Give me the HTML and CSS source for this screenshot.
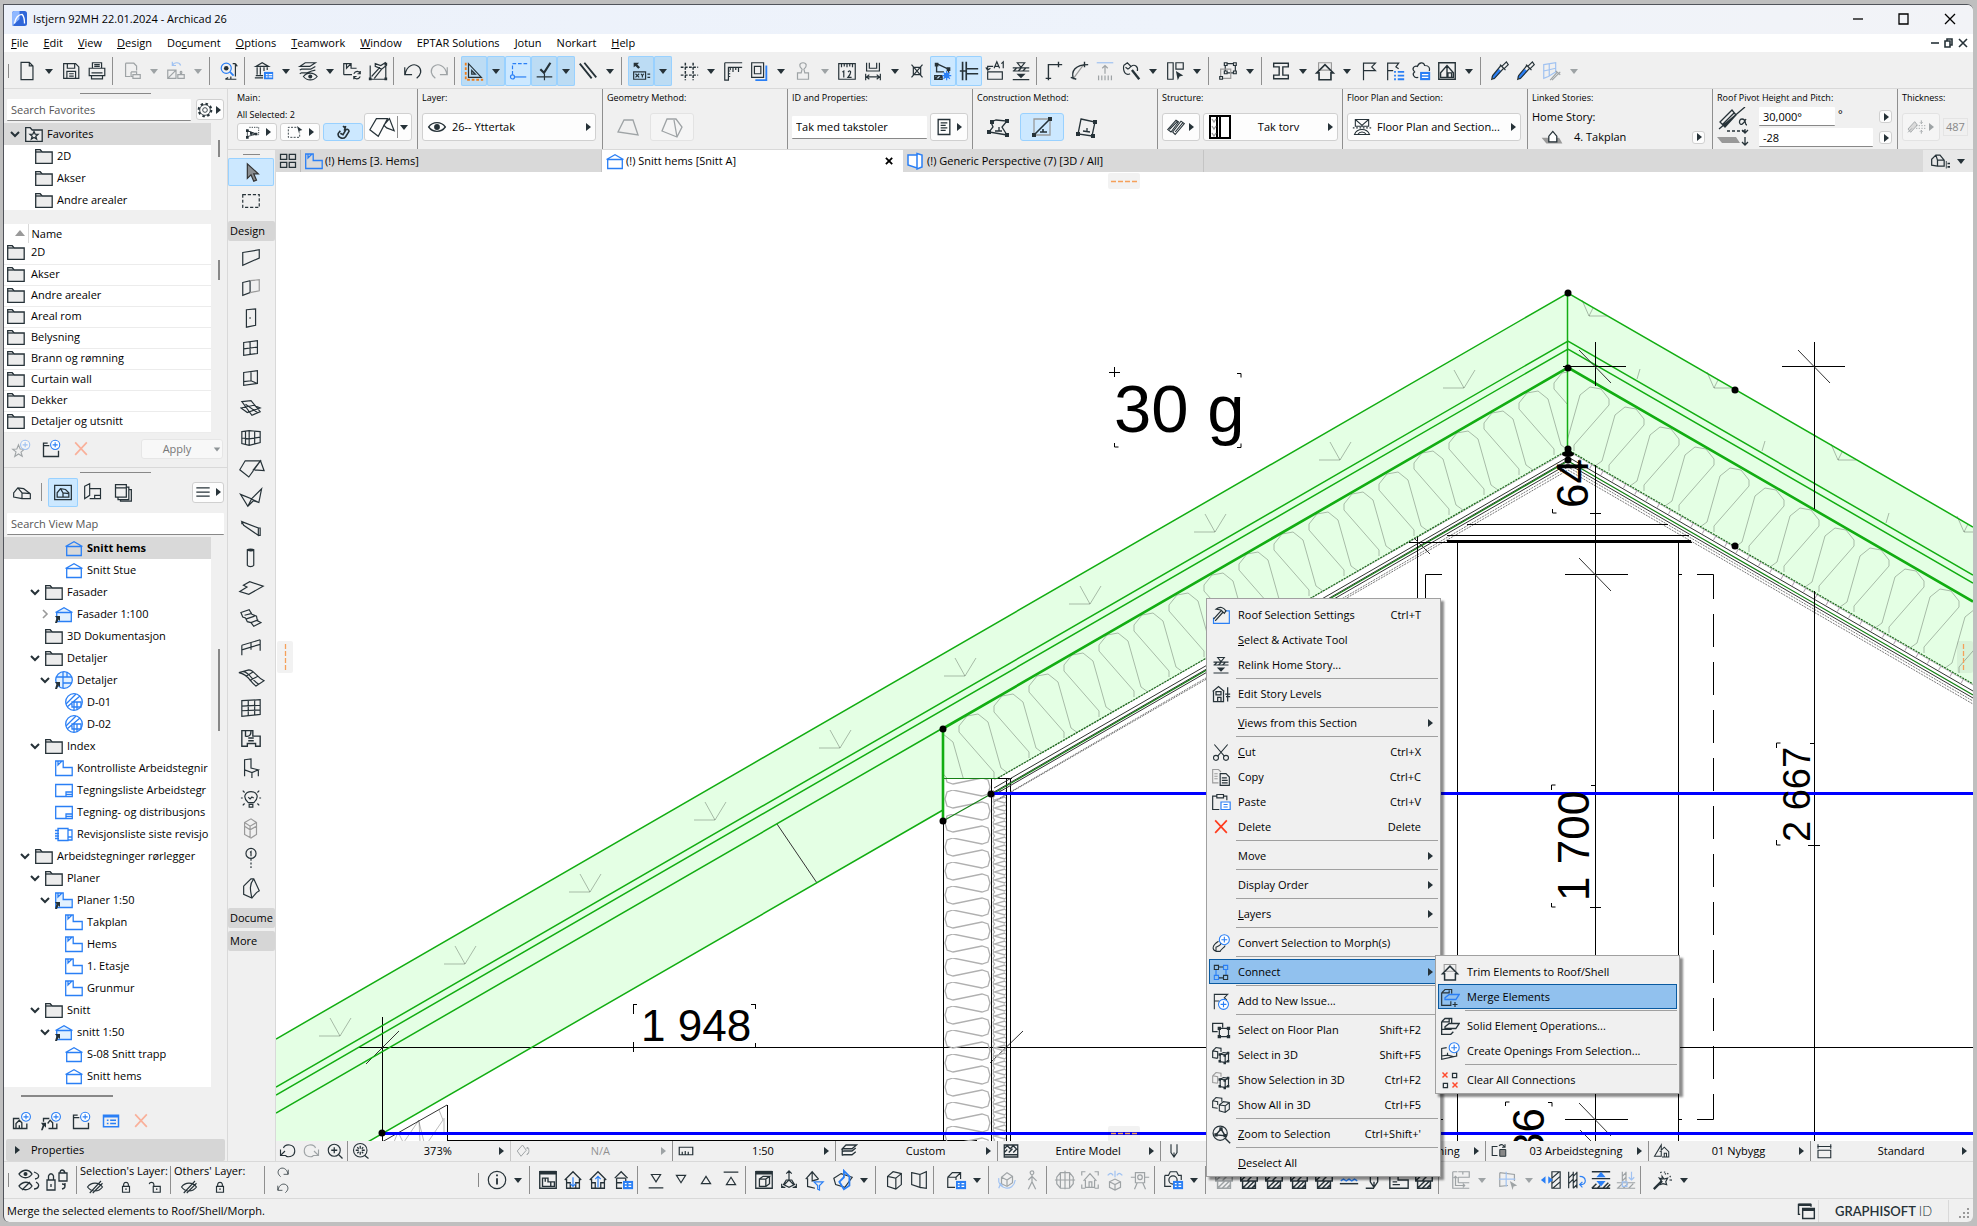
FILE: index.html
```html
<!DOCTYPE html>
<html lang="en">
<head>
<meta charset="utf-8">
<title>Istjern 92MH 22.01.2024 - Archicad 26</title>
<link rel="stylesheet" href="styles.css">
</head>
<body>
<svg class="sprite" aria-hidden="true">
<defs>
<symbol id="drop" viewBox="0 0 10 10"><path class="f" d="M1 3h8L5 8z"/></symbol>
<symbol id="play" viewBox="0 0 10 10"><path class="f" d="M3 1v8l5-4z"/></symbol>
<symbol id="chev" viewBox="0 0 20 20"><path stroke-width="2" d="M6 8l4 4 4-4"/></symbol>
<symbol id="chevr" viewBox="0 0 20 20"><path class="g" stroke-width="1.600" d="M8 6l4 4-4 4"/></symbol>
<symbol id="folder" viewBox="0 0 18 18"><path class="pf" d="M.7 2.700h4.500l2 2.300h10v11.300H.7z"/><path d="M.7 5h6"/></symbol>
<symbol id="favfolder" viewBox="0 0 18 18"><path class="pf" d="M.7 2.700h4.500l2 2.300h10v11.300H.7z"/><path d="M9 6.500l1.200 2.700 2.800.2-2.200 1.800.8 2.800L9 12.400 6.400 14l.8-2.800L5 9.400l2.800-.2z"/></symbol>
<symbol id="sect" viewBox="0 0 18 18"><path class="b" d="M1.700 7.500h14.600v9H1.700zM.5 7.500L9 2.700l8.500 4.800"/></symbol>
<symbol id="sectl" viewBox="0 0 18 18"><path class="b bf" d="M1.700 7.500h14.600v9H1.700zM.5 7.500L9 2.700l8.500 4.800"/><path class="f" d="M0 11h5v5L3.500 14.500 2 18H0l1.500-5z"/></symbol>
<symbol id="plan" viewBox="0 0 18 18"><path class="b" d="M.7 2h7.500v6.500h9v8H.7zM3 2v4l4-4"/></symbol>
<symbol id="planl" viewBox="0 0 18 18"><path class="b bf" d="M.7 2h7.500v6.500h9v8H.7zM3 2v4l4-4"/><path class="f" d="M0 11h5v5L3.500 14.500 2 18H0l1.500-5z"/></symbol>
<symbol id="det" viewBox="0 0 18 18"><circle class="b" cx="9" cy="9" r="8.300"/><path class="b" d="M1 11L11 1M2 14L15 3M7 9h9v5H7zM9 9v8M12 9v8"/></symbol>
<symbol id="detl" viewBox="0 0 18 18"><circle class="b bf" cx="9" cy="9" r="8.300"/><path class="b" d="M1 6h7v6h9M8 1v5M8 12v5M8 6h9M12 1v5"/><path class="f" d="M0 11h5v5L3.500 14.500 2 18H0l1.500-5z"/></symbol>
<symbol id="layout" viewBox="0 0 18 18"><path class="b" d="M.7 3.500h16.600v12H.7zM11 15.500v-4.500h6M11 13.300h6"/></symbol>
<symbol id="rev" viewBox="0 0 18 18"><path class="b" d="M3 3.500h10v12H3zM13 5h4v10h-4M13 12h4M0 5.500h4M0 8.500h4M0 11h4M0 13.500h4"/></symbol>

<symbol id="new" viewBox="0 0 24 24"><path d="M5.500 2.500h9l4 4v15h-13zM14.500 2.500v4h4"/></symbol>
<symbol id="save" viewBox="0 0 24 24"><path d="M4 4h13l3.500 3.500V20H4zM8 4v5h8V4M7.500 20v-7.500h9.500V20M10 15h5M10 17.500h5"/></symbol>
<symbol id="print" viewBox="0 0 24 24"><path d="M7 9V3h10v6M9 5h6M9 7h6M3.500 9h17v8h-17zM6 17v3.500h12V17M6 14h12"/></symbol>
<symbol id="link" viewBox="0 0 24 24"><path d="M5 3.500h9l3 3v5M5 3.500V18h5M11 13h6v3M13 16h8v4h-8zM11 13v5h2"/></symbol>
<symbol id="swap" viewBox="0 0 24 24"><path class="b" d="M8 6c2-4 8-4 9 0M8 2v4h4"/><path d="M3 11h9v9H3zM3 20l9-9M14 20v-4h7v4zM17.500 16c-3-5 3-5 0 0"/></symbol>
<symbol id="find" viewBox="0 0 24 24"><circle class="b" cx="9" cy="9" r="5.500"/><circle class="f" cx="9" cy="9" r="2.500"/><path class="b" stroke-width="2" d="M13 13l4 4"/><path d="M19 4v14M19 4h-3M19 4l2 3M8 21h12M8 21l3-2M14 21v-3"/></symbol>
<symbol id="lib" viewBox="0 0 24 24"><path d="M3 7l7-4 7 4zM4.500 8v8M8 8v8M12 8v4M15.500 8v3M3 17h8M2 19.500h9"/><path class="bp" d="M12 13h10v8H12z"/><path class="w" d="M14 16h2M17 16h4M14 18.500h2M17 18.500h4"/></symbol>
<symbol id="lay" viewBox="0 0 24 24"><path d="M3 7l6-4h11l-6 4zM3 11l2-1h10l5-3M3 15l2-1h6l5-2 4-1M7 18c4-5 11-5 15 0-4 5-11 5-15 0z"/><circle class="f" cx="14.500" cy="18" r="2.200"/></symbol>
<symbol id="map" viewBox="0 0 24 24"><path d="M3 16V4h8v5h6M3 16h9M6 4v5l5-5M14 15c2-4 6-3 7 0M21 12v3h-3M21 18c-2 4-6 3-7 0M14 21v-3h3"/></symbol>
<symbol id="ham" viewBox="0 0 24 24"><path d="M3.500 6v15h17V6M5 18L14 8M8 20l8-10M9 4l6 2 5-3 1 3-5 4-7-3z"/><path class="f" d="M2 19h3v3H2zM19 19h3v3h-3zM19 3h3v3h-3z"/></symbol>
<symbol id="undo" viewBox="0 0 24 24"><path d="M3 8v8h8M3.500 15.500C5 6 13 3 18 7c4 4 3 9-2 13"/></symbol>
<symbol id="redo" viewBox="0 0 24 24"><path d="M21 8v8h-8M20.500 15.500C19 6 11 3 6 7c-4 4-3 9 2 13"/></symbol>
<symbol id="tri" viewBox="0 0 24 24"><path class="o" stroke-dasharray="3 2" d="M3 3v18.500h19"/><path d="M6 4v15h14zM9.500 11.500v4h4z"/></symbol>
<symbol id="guide" viewBox="0 0 24 24"><path class="b" stroke-dasharray="4 2" d="M6 16V4h16"/><path class="b" d="M8 18.500h13"/><circle class="b" cx="6" cy="18.500" r="2.200"/></symbol>
<symbol id="snap" viewBox="0 0 24 24"><path d="M4 18.500h17M12.500 15v7"/><path stroke-width="2.400" d="M8 10l4 4 7-11"/></symbol>
<symbol id="par" viewBox="0 0 24 24"><path stroke-width="2" d="M3 4l13 16M8 3l13 16"/></symbol>
<symbol id="xy" viewBox="0 0 24 24"><path d="M4 13h13v8H4zM19 15.500h3M19 19h3M6 15l4 4M10 15l-4 4M12 15l1.500 2 1.500-2M13.500 17v2"/><path class="f" d="M4 3h6L8 5l3 3-2 1.500-3-3L4 8z"/></symbol>
<symbol id="grid" viewBox="0 0 24 24"><path stroke-width="1.600" stroke-dasharray="3 1.500" d="M3 8h19M3 16.500h19M8 3v19M16.500 3v19"/></symbol>
<symbol id="ruler" viewBox="0 0 24 24"><path d="M3 3h19M3 3v19h4V8h15M9 8v3M12 8v5M15 8v3M18 8v5M7 12h2M7 15h2M7 18h2"/></symbol>
<symbol id="dupe" viewBox="0 0 24 24"><path d="M4 3h13v16H4zM7 7h7v8H7z"/><path class="b" stroke-width="2" d="M20 6v16H8"/></symbol>
<symbol id="stamp" viewBox="0 0 24 24"><path d="M6 21v-7h4l1-4c-4-3-3-7 1-7s5 4 1 7l1 4h4v7z"/></symbol>
<symbol id="meas" viewBox="0 0 24 24"><path d="M3 4h18v17H3zM6 4v4M9 4v3M12 4v4M15 4v3M18 4v4M7 13l1.500-1v7M13 13c4-3 4 1 0 6h4"/></symbol>
<symbol id="dimh" viewBox="0 0 24 24"><path d="M5 3v9h14V3M8 3v6h8V3M4 15v7M20 15v7M5 18.500h14M8 16l-3 2.500L8 21M16 16l3 2.500-3 2.500"/></symbol>
<symbol id="xs" viewBox="0 0 24 24"><path d="M6 5l12 14M18 5L6 19M8 8h8v8H8z"/></symbol>
<symbol id="sun" viewBox="0 0 24 24"><path stroke-width="1.500" d="M5 4l13 6v4M5 4v9h8M3 21v-4h8v4zM3 21l4-4M7 21l4-4"/><path class="f" d="M3 3h4v4H3zM16 8h4v4h-4z"/><circle class="bp" cx="16" cy="17" r="3"/><path class="b" d="M16 12v10M11 17h10M12.500 13.500l7 7M19.500 13.500l-7 7"/></symbol>
<symbol id="tjoin" viewBox="0 0 24 24"><path stroke-width="1.800" d="M5 2v20M9 2v20M9 9.500h13M9 15h13M2 12h7"/></symbol>
<symbol id="a1" viewBox="0 0 24 24"><path d="M4 13h16v8H4zM4 10V7h6M2 8l2 3 3-2M11 9l3-7 3 7M12 7h4M19 4l2-2v7"/></symbol>
<symbol id="relink" viewBox="0 0 24 24"><path d="M3 8.500h18M3 12h18M3 21.500h18M8 3h8l-4 5zM4 12l3-3M9 12l3-3M14 12l3-3"/><path class="f" d="M7 15h10l-5 5z"/></symbol>
<symbol id="corner" viewBox="0 0 24 24"><path stroke-width="1.500" d="M7 22V5h15M18 2v6M4 20h6"/></symbol>
<symbol id="arc" viewBox="0 0 24 24"><path class="g" d="M6 20L17 5"/><path stroke-width="1.500" d="M6 21C3 12 8 5 22 5M18 2v6M3 19l6 2"/></symbol>
<symbol id="upl" viewBox="0 0 24 24"><path class="b" d="M3 3h18"/><path d="M12 6v9M9 9l3-3 3 3M5 17v5M8.500 17v5M12 17v5M15.500 17v5M19 17v5"/></symbol>
<symbol id="wr" viewBox="0 0 24 24"><path d="M4 6l4-3 4 4c4-3 8 0 7 5M4 6c-1 8 3 11 7 9M9 10l3-3M6 8l3 2"/><path stroke-width="2.600" d="M13 11l8 10"/></symbol>
<symbol id="boxa" viewBox="0 0 24 24"><path d="M4 3h6v18H4zM13 3h8v7h-8z"/><path class="f" d="M13 12l8 5-4 1-2 4z"/></symbol>
<symbol id="grp" viewBox="0 0 24 24"><path d="M9 4h11v10H9z"/><path class="g" d="M4 10h11v10H4z"/><path class="pf" d="M8 3h3v3H8zM18 3h3v3h-3zM18 12h3v3h-3zM8 12h3v3H8zM3 18h3v3H3z"/></symbol>
<symbol id="ibeam" viewBox="0 0 24 24"><path stroke-width="1.500" d="M4 3.500h16v4h-6v9h6v4H4v-4h6v-9H4z"/></symbol>
<symbol id="house" viewBox="0 0 24 24"><path class="g" d="M5 3h14v8H5z"/><path stroke-width="1.800" d="M3 14l9-9 9 9h-2.500v7.500h-13V14z"/></symbol>
<symbol id="flag" viewBox="0 0 24 24"><path d="M6 22V3.500h13l-4 4 4 4H6"/></symbol>
<symbol id="flagl" viewBox="0 0 24 24"><path d="M4 22V3.500h12l-3 4 3 2M4 11.500h6"/><path class="b" stroke-width="2" d="M11 13h2M15 13h7M11 17h2M15 17h7M11 21h2M15 21h7"/></symbol>
<symbol id="cloud" viewBox="0 0 24 24"><path d="M9 19c-5 1-7-4-4-6-4-4 0-7 3-6 2-5 7-5 8-1 5 0 6 3 5 6"/><path class="bp" d="M11 13h11v9H11z"/><path class="w" d="M13 16h7M13 19h7"/></symbol>
<symbol id="photo" viewBox="0 0 24 24"><path stroke-width="1.500" d="M3 3h18v18H3zM5 19V14L12 6l7 8v5zM13 19v-5h4v5M12 6v13"/></symbol>
<symbol id="pip" viewBox="0 0 24 24"><path class="b" stroke-width="4" d="M4 20l8-9"/><path d="M3 21l1-4 9-11 3 3-10 11zM12 5l6 6M14 7l5-5 2 3-5 5"/></symbol>
<symbol id="pipg" viewBox="0 0 24 24"><path class="b" d="M3 5l13-2v10l-8 5-5 2zM9 4v14M3 12l13-3"/><path d="M10 22l8-9M12 22l9-9M16 12l5 4"/></symbol>

<symbol id="gear" viewBox="0 0 24 24"><circle cx="12" cy="12" r="3.500"/><circle cx="12" cy="12" r="8"/><circle cx="12" cy="12" r="9.500" stroke-width="3" stroke-dasharray="3.700 3.700"/></symbol>
<symbol id="sel1" viewBox="0 0 24 24"><path stroke-dasharray="2 1.500" d="M8 5h14v11H11"/><path class="f" d="M3 8h4v4H3zM3 18h4v4H3zM16 13h4v4h-4zM9 12h4v4H9z"/><path d="M5 10v9l13-4zM5 10l13 5"/></symbol>
<symbol id="sel2" viewBox="0 0 24 24"><path stroke-dasharray="3 2" d="M14 5H2v15h17v-7"/><path class="f" d="M15 3l8 6-4 1-1 4z"/></symbol>
<symbol id="mag" viewBox="0 0 24 24"><path stroke-width="2.400" d="M8 10l-3 4c-2 6 7 10 11 5l5-8c0-3-3-4-5-2l-4 7-4-2M12 3l4 4M16 3l-2 7"/></symbol>
<symbol id="roofi" viewBox="0 0 30 24"><path d="M9 3h12L11 22 2 15zM17 10l6-7 5 13-8-3z"/></symbol>
<symbol id="eye" viewBox="0 0 24 24"><path stroke-width="1.600" d="M2 12c5-7 15-7 20 0-5 7-15 7-20 0z"/><circle class="f" cx="12" cy="12" r="3.500"/></symbol>
<symbol id="gm1" viewBox="0 0 24 24"><path d="M8 5h9l5 15L2 17z"/></symbol>
<symbol id="gm2" viewBox="0 0 24 24"><path d="M7 4h9l6 8-5 10L2 16zM14 5l3 17"/></symbol>
<symbol id="doc" viewBox="0 0 24 24"><path stroke-width="1.600" d="M5 3h14v18H5zM8 7h8M8 10h6M8 13h8M8 16h6"/></symbol>
<symbol id="cm1" viewBox="0 0 24 24"><path d="M5 7l5-2 11 1-5 6 5 8-18-3 4-5zM9 16h7M13 12v4"/><path class="f" d="M4 5h4v4H4zM1 15h4v4H1zM19 18h4v4h-4zM19 4h4v4h-4z"/></symbol>
<symbol id="cm2" viewBox="0 0 24 24"><path class="g" d="M4 4h16v16H4z"/><path stroke-width="1.600" d="M4 20L20 4M10 17h7M13 14v3"/><path class="f" d="M2 18h4v4H2zM18 2h4v4h-4z"/></symbol>
<symbol id="cm3" viewBox="0 0 24 24"><path d="M7 4l14 3-3 14-14-2zM9 16l7 1M13 13v3"/><path class="f" d="M2 17h4v4H2zM17 19h4v4h-4zM19 5h4v4h-4z"/></symbol>
<symbol id="hatch" viewBox="0 0 24 24"><path d="M2 15L12 4l3 2L6 18zM8 18L18 5l4 3-11 13zM4 15L14 5M11 18l9-11"/></symbol>
<symbol id="comp" viewBox="0 0 24 24"><path class="wf" stroke="#000" stroke-width="2" d="M2 1h20v22H2z"/><path stroke="#000" stroke-width="2" d="M9 1v22M12 1v22"/><path class="g" d="M4 4l2 3 2-3M4 11l2 3 2-3M4 18l2 3 2-3"/></symbol>
<symbol id="fps" viewBox="0 0 24 24"><path d="M4 3h16v8H4zM4 3l8 7 8-7M3 21c3-8 15-8 18 0zM7 21c2-4 8-4 10 0"/><path stroke-dasharray="2 2" d="M1 13h22"/></symbol>
<symbol id="hstory" viewBox="0 0 26 20"><path fill="#999" stroke="none" d="M0 11h22l4 7H6z"/><path class="wf" stroke-width="1.600" d="M9 16V9l5-6 5 6v7z"/></symbol>
<symbol id="slope" viewBox="0 0 32 40"><path d="M3 15L15 3l4 5L8 20zM5 18L17 6M7 19L19 8M2 22L28 0"/><path stroke-dasharray="3 2" d="M10 24h20"/><path d="M29 12c-6 12-9 0-4 0s2 6 5 6M28 22v4M25 23l3 3 3-3M28 30v8M25 35l3 3 3-3"/><path fill="#999" stroke="none" d="M0 30h19l4 6H5z"/></symbol>
<symbol id="thick" viewBox="0 0 30 24"><path fill="#bbb" d="M3 15L13 4l4 5L7 20zM3 20l6-6"/><path stroke-dasharray="2 2" d="M15 10h14M15 14h14"/><path d="M23 2v5M21 5l2 2 2-2M23 22v-5M21 19l2-2 2 2"/></symbol>
<symbol id="four" viewBox="0 0 24 24"><path stroke-width="1.500" d="M3 4h7.500v6H3zM13.500 4H21v6h-7.500zM3 13.500h7.500v6H3zM13.500 13.500H21v6h-7.500z"/></symbol>
<symbol id="d3" viewBox="0 0 18 18"><path class="b wf" stroke-width="1.500" d="M1 3h9v13l-9-3zM10 1.500l5 1.500v12l-5 2z"/></symbol>
<symbol id="h3" viewBox="0 0 24 24"><path stroke-width="1.500" d="M2 17V10l5-5h5l5 6v7H9zM9 18v-7L7 5M9 11h8"/><path class="f" d="M19 12h1v9h-1zM21 14h3v2h-3zM21 18h3v2h-3z"/></symbol>

<symbol id="starp" viewBox="0 0 24 24"><path d="M9 7l2 5 5 .3-4 3.500 1.500 5L9 18l-4.500 3 1.500-5.500-4-3.200 5-.3z"/><circle class="b wf" cx="17" cy="7" r="5.500"/><path class="b" d="M17 4v6M14 7h6"/></symbol>
<symbol id="foldp" viewBox="0 0 24 24"><path stroke-width="1.600" d="M10 8H3V5h5M3 8v13h18v-7"/><circle class="b wf" cx="17" cy="7" r="5.500"/><path class="b" d="M17 4v6M14 7h6"/></symbol>
<symbol id="homep" viewBox="0 0 24 24"><path stroke-width="1.600" d="M10 9H3v12h16v-6M6 21v-6l4-4 3 3v7M10 21v-4"/><circle class="b wf" cx="18" cy="7" r="5.300"/><path class="b" d="M18 4v6M15 7h6"/></symbol>
<symbol id="homel" viewBox="0 0 24 24"><path stroke-width="1.600" d="M10 9H3v4M9 21h10v-6M8 15l3-4 3 3v7"/><path class="f" d="M0 14h6v6l-2-2-2 5H0l2-6z"/><circle class="b wf" cx="18" cy="7" r="5.300"/><path class="b" d="M18 4v6M15 7h6"/></symbol>
<symbol id="ex" viewBox="0 0 24 24"><path stroke="#f9b09a" stroke-width="2" d="M5 4l14 15M19 4L5 19"/></symbol>
<symbol id="del" viewBox="0 0 24 24"><path stroke="#ff3b1d" stroke-width="2" d="M5 4l14 15M19 4L5 19"/></symbol>
<symbol id="listb" viewBox="0 0 24 24"><path class="b" stroke-width="1.800" d="M3 5h18v14H3zM3 7h18M7 11h2M7 15h2M11 11h7M11 15h7"/></symbol>
<symbol id="nav1" viewBox="0 0 24 24"><path stroke-width="1.400" d="M2 13l5-6 7 1 8 6v6H12l-10-2zM12 20v-7L7 7M12 13l10 1"/></symbol>
<symbol id="nav2" viewBox="0 0 24 24"><path stroke-width="1.500" d="M2 4h20v17H2zM5 18v-5l4-5 6 1 4 4v5zM12 18v-5L9 8M12 13l7 1"/></symbol>
<symbol id="nav3" viewBox="0 0 24 24"><path stroke-width="1.400" d="M2 5l6-3v14l-6 4zM8 8h13v12H8M14 20v-4h7"/></symbol>
<symbol id="nav4" viewBox="0 0 24 24"><path stroke-width="1.500" d="M3 3h13v15H3zM3 7h13M16 6h3v15H6v-3M19 9h3v14H9v-2"/></symbol>
<symbol id="ham3" viewBox="0 0 24 24"><path stroke-width="1.500" d="M4 7h16M4 12h16M4 17h16"/></symbol>

<symbol id="arrow" viewBox="0 0 24 24"><path fill="#8a8d90" stroke="#333" d="M8 3v16l4-4 3 7 3-1-3-7h5z"/></symbol>
<symbol id="marq" viewBox="0 0 24 24"><path stroke-dasharray="3.500 2" d="M3 5h18v14H3z"/></symbol>
<symbol id="t1" viewBox="0 0 24 24"><path d="M3 6l18-3v9L3 20z"/></symbol>
<symbol id="t2" viewBox="0 0 24 24"><path d="M3 6l8-2v13l-8 3z"/><path class="g" d="M11 4l10-1v12l-10 2"/></symbol>
<symbol id="t3" viewBox="0 0 24 24"><path d="M7 3l10-1v18L7 22zM10 12h2"/></symbol>
<symbol id="t4" viewBox="0 0 24 24"><path d="M4 6l15-2v14L4 20zM11 5v14M4 13l15-2"/></symbol>
<symbol id="t5" viewBox="0 0 24 24"><path d="M4 6l15-2v14L4 20zM12 5v10M4 16l8-1 7 3"/></symbol>
<symbol id="t6" viewBox="0 0 24 24"><path d="M2 5l10-1 10 12-9 4zM1 12l14-3 7 3-14 5zM6 8l13 9"/></symbol>
<symbol id="t7" viewBox="0 0 24 24"><path d="M2 5l8-1 12 1v12l-12 3-8-2zM10 4v16M6 5v14M16 5v14M2 12l8 1 12-2"/></symbol>
<symbol id="t8" viewBox="0 0 30 24"><path d="M8 4h17L12 22 2 14zM17 14l8-10 4 11z"/></symbol>
<symbol id="t9" viewBox="0 0 24 24"><path d="M0 8l12 5L23 2l-3 15-6-2-6 6zM12 13l8 4M12 13l-4 8"/></symbol>
<symbol id="t10" viewBox="0 0 24 24"><path d="M2 5l18 7v8L4 9zM2 5v3M20 12h2v8h-2"/></symbol>
<symbol id="t11" viewBox="0 0 24 24"><path d="M8 3v17c1 2 6 2 7 0V3zM8 3c1-1 6-1 7 0s-6 2-7 0"/></symbol>
<symbol id="t12" viewBox="0 0 30 24"><path d="M2 16l8-5-4-2 7-4 15 5-16 9z"/></symbol>
<symbol id="t13" viewBox="0 0 24 24"><path d="M1 6l9-3 3 5 5 2 1 5 4 2-8 4-3-4-4-1-2-4-3-1zM5 9l8-2M7 13l9-3M12 17l8-3"/></symbol>
<symbol id="t14" viewBox="0 0 24 24"><path d="M2 9l20-6M2 14l20-6M2 9v11M12 6v8M22 3v12"/></symbol>
<symbol id="t15" viewBox="0 0 30 24"><path d="M1 6l11-3c6 0 8 8 17 12l-9 6C13 16 12 8 1 6zM6 5c7 1 9 9 17 14M9 10l8-5M13 15l9-5"/></symbol>
<symbol id="t16" viewBox="0 0 24 24"><path d="M2 4l20-1v16L2 21zM9 4v16M16 3v17M2 10l20-1M2 15l20-1"/></symbol>
<symbol id="t17" viewBox="0 0 24 24"><path stroke-width="1.500" d="M2 4h12v6h8v11h-5v-3H8v3H2zM6 4v6c5 1 6-2 6-6M9 12h6M9 15h6"/></symbol>
<symbol id="t18" viewBox="0 0 24 24"><path d="M5 3l7-1v10l8 2-7 3-8-3zM5 14v7M13 17v6M20 14v7"/></symbol>
<symbol id="t19" viewBox="0 0 24 24"><path d="M9 17c-7-6-3-12 3-12s10 6 3 12zM10 19h4v3h-4zM9 11l2 2 2-2 2 1M1 12h2M21 12h2M3 4l2 2M21 4l-2 2M3 20l2-2M21 20l-2-2"/></symbol>
<symbol id="t20" viewBox="0 0 24 24"><path class="g" d="M5 6l7-4 6 4v13l-6 4-7-4zM5 6l6 4 7-4M11 10v13M5 10l6 4 7-4"/></symbol>
<symbol id="t21" viewBox="0 0 24 24"><circle cx="12" cy="7" r="5.500"/><path d="M11 6l1-1v5"/><path stroke-dasharray="2 2" d="M12 13v10"/></symbol>
<symbol id="t22" viewBox="0 0 24 24"><path d="M4 10l8-8h3l6 13-3 2-5 6-9-4zM15 2c-5 6-4 12-2 21"/></symbol>

<symbol id="cyc" viewBox="0 0 24 24"><path d="M2 6c4-5 10-5 13 0-3 5-10 5-13 0zM2 18c4-5 10-5 13 0-3 5-10 5-13 0zM5 22l8-8M17 4c6 2 6 6 1 7M19 14c5 3 2 7-2 7"/><circle class="f" cx="8.500" cy="6" r="2"/></symbol>
<symbol id="lock2" viewBox="0 0 24 24"><path d="M2 12h8v10H2zM3.500 12V8c1-3 4-3 5 0v4M14 5h8v8h-8zM15 5c0-4 4-4 5 0M17 16c4 0 4 4 0 5M20 15v3M6 16v3"/></symbol>
<symbol id="eyex" viewBox="0 0 24 24"><path stroke-width="1.500" d="M2 12c5-7 15-7 20 0-5 7-15 7-20 0zM5 20L20 4M9 20L22 7"/></symbol>
<symbol id="lock" viewBox="0 0 24 24"><path stroke-width="2" d="M6 11h12v10H6zM8 11V7c1-4 7-4 8 0v4M12 14v3"/></symbol>
<symbol id="ulock" viewBox="0 0 24 24"><path stroke-width="2" d="M9 11h12v10H9zM10 11V7c-1-4-7-4-8 0M15 14v3"/></symbol>
<symbol id="info" viewBox="0 0 24 24"><circle cx="12" cy="12" r="9.500"/><path stroke-width="2" d="M12 10v7M12 6v2"/></symbol>
<symbol id="b1" viewBox="0 0 24 24"><path stroke-width="1.500" d="M3 3h18v18H3zM6 10h6v4h7v5H6zM9 10v4M15 14v5"/><path class="f" d="M3 2h18v4H3z"/></symbol>
<symbol id="b2" viewBox="0 0 24 24"><path stroke-width="1.400" d="M3 12l9-9 9 9M5 11v10h14V11M5 15h4v6M15 21v-6h4"/><path class="b" d="M12 9v10M9 16l3 3 3-3"/></symbol>
<symbol id="b3" viewBox="0 0 24 24"><path stroke-width="1.400" d="M3 12l9-9 9 9M5 11v10h14V11M5 15h4v6M15 21v-6h4"/><path class="b" d="M12 8v12M9 11l3-3 3 3"/></symbol>
<symbol id="b4" viewBox="0 0 24 24"><path stroke-width="1.400" d="M3 10l7-7 7 7M5 10v11h6M5 15h6M15 10v3M5 10h10"/><path class="bp" d="M12 13h11v9H12z"/><path class="w" d="M14 16h2M18 16h3M14 19h2M18 19h3"/></symbol>
<symbol id="b5" viewBox="0 0 24 24"><path d="M4 20.500h16M7 6h10l-5 8z"/></symbol>
<symbol id="b6" viewBox="0 0 24 24"><path d="M7 7h10l-5 8z"/></symbol>
<symbol id="b7" viewBox="0 0 24 24"><path d="M7 16h10l-5-8z"/></symbol>
<symbol id="b8" viewBox="0 0 24 24"><path d="M4 3.500h16M7 17h10l-5-8z"/></symbol>
<symbol id="b9" viewBox="0 0 24 24"><path stroke-width="1.400" d="M3 3h18v18H3zM7 11h7v8H7zM7 11l4-3h7l-4 3M18 8v8l-4 3"/><path class="f" d="M3 2h18v4H3z"/></symbol>
<symbol id="b10" viewBox="0 0 24 24"><path d="M12 3v9L4 20M12 12l8 8M9 5l3-3 3 3M9 12h6l3 5-6 3-6-3zM4 16v4h4M20 16v4h-4"/></symbol>
<symbol id="b11" viewBox="0 0 24 24"><path d="M3 11l7-8 7 8M5 10v9l8 2M10 3v10l7-2"/><path class="b" d="M12 14h10l-4 4v5l-2-1v-4z"/></symbol>
<symbol id="b12" viewBox="0 0 24 24"><path d="M2 10l8-5 12 4-8 11-10-3z"/><path class="b" stroke-width="2" d="M13 2l6 6v10l-6 4-5-8 5-5z"/></symbol>
<symbol id="b13" viewBox="0 0 24 24"><path d="M5 8l6-5 9 2v12l-6 5-9-3zM5 8l9 2v12M14 10l6-5"/></symbol>
<symbol id="b14" viewBox="0 0 24 24"><path d="M4 4l9 2v14l-9-3zM13 6l7-3v18l-7-1"/></symbol>
<symbol id="b15" viewBox="0 0 24 24"><path d="M3 9l5-5h9v7M3 9h9v3M3 9v11h8M12 9l5-5"/><path class="bp" d="M12 13h11v9H12z"/><path class="w" d="M14 16h2M18 16h3M14 19h2M18 19h3"/></symbol>
<symbol id="b16" viewBox="0 0 24 24"><path d="M6 9l6-5 6 4v7l-6 4-6-3zM6 9l6 3v6M12 12l6-4"/><path class="b" d="M3 10c-2 12 16 16 18 2M3 21l2-5 3 4"/></symbol>
<symbol id="b17" viewBox="0 0 24 24"><circle cx="12" cy="4" r="2"/><path d="M12 6v8l4 8M12 14l-4 8M8 12l4-4 5 5"/></symbol>
<symbol id="b18" viewBox="0 0 24 24"><path d="M7 4h10l4 5v7l-4 5H7l-4-5V9zM12 2v20M1 12h22M7 4v17M17 4v17"/></symbol>
<symbol id="b19" viewBox="0 0 24 24"><path d="M3 7V3h4M17 3h4v4M21 17v4h-4M7 21H3v-4M5 13l7-8 7 8M7 12v8h10v-8M11 20v-6h3v6"/></symbol>
<symbol id="b20" viewBox="0 0 24 24"><path class="b" d="M4 7c3-3 4-3 6 0M20 7c-3-3-4-3-6 0M12 2v7"/><path d="M6 14l6-3 6 3v6l-6 3-6-3zM6 14l6 3 6-3M12 17v6"/></symbol>
<symbol id="b21" viewBox="0 0 24 24"><path d="M7 4h10v11H7zM2 9h5M17 9h5M9 15l-3 7M15 15l3 7"/><circle cx="12" cy="9" r="2.500"/></symbol>
<symbol id="b22" viewBox="0 0 24 24"><path d="M3 7h4l2-4h7l2 4h3v5M3 7v12h7"/><circle cx="12" cy="12" r="4.500"/><path class="bp" d="M12 13h11v9H12z"/><path class="w" d="M14 16h2M18 16h3M14 19h2M18 19h3"/></symbol>
<symbol id="ha" viewBox="0 0 24 24"><path stroke-width="1.600" d="M3 8h18v5H3zM5 13v8h14v-8M5 21l8-8M10 21l8-8M15 21l4-4M3 13l5-5M10 13l5-5"/></symbol>
<symbol id="hb" viewBox="0 0 24 24"><path class="b" stroke-width="1.600" d="M3 13l3-2 3 2 3-2 3 2 3-2 3 2"/><path stroke-width="1.600" d="M2 16h20"/></symbol>
<symbol id="hl" viewBox="0 0 24 24"><path stroke-width="1.500" d="M2 5h9v7h11v9H2zM5 17h8M5 14h5"/></symbol>
<symbol id="pen" viewBox="0 0 24 24"><path stroke-width="1.500" d="M8 3v11l4 6 4-6V3M12 14v6"/></symbol>
<symbol id="pend" viewBox="0 0 24 24"><path stroke-width="1.500" d="M8 3v11l4 6 4-6V3M12 14v6M3 21h9"/></symbol>
<symbol id="c1" viewBox="0 0 24 24"><path d="M3 3h5M3 3v18h18M9 3h12v6H9M9 15h12M9 9v6M14 3v3M6 8v10h10M4 10l2-2 2 2M14 16l2 2-2 2"/></symbol>
<symbol id="c2" viewBox="0 0 24 24"><path d="M3 4l16 2v7M3 4v15l9-1"/><path class="b" d="M10 3v16M2 11h18"/><path class="f" d="M14 13l8 5-4 1-1 4z"/></symbol>
<symbol id="c3" viewBox="0 0 24 24"><path d="M13 3h9v18h-9zM13 10l8-7M13 16l9-8M14 21l8-7"/><path class="bp" d="M6 8v8l-5-4zM9 8v8l5-4z"/></symbol>
<symbol id="c4" viewBox="0 0 24 24"><path d="M4 3v18M9 3v18M13 3v18M4 10l5-5M4 16l5-5M9 8l4-4M9 15l4-4M9 21l4-4"/><path class="b" d="M16 8c8 0 8 10 1 9M19 14l-3 3 3 3"/></symbol>
<symbol id="c5" viewBox="0 0 24 24"><path stroke-width="1.600" d="M2 3h20M2 10.500h20M2 21h20M2 21l5-5M8 21l3-3M14 21l6-6M18 21l4-4"/><path class="bp" d="M7 9l5-6 5 6zM7 13l5 6 5-6z"/></symbol>
<symbol id="c6" viewBox="0 0 24 24"><path d="M8 3v11M12 3v11M8 8l4-4M8 13l4-4M2 15h20M2 21h20M3 21l5-5M9 21l5-5M15 21l5-5"/><path class="b" d="M18 3v9M15 9l3 3 3-3M8 14h5v5H8z"/></symbol>
<symbol id="wand" viewBox="0 0 24 24"><path stroke-width="2.500" d="M2 22l9-9"/><path d="M11 8l2 3 4-1-2 4 1 3-4-1-3 1 1-4-2-3 3 1z"/><path stroke-dasharray="1.500 2.500" d="M9 4c6-3 13 3 12 11M14 5l3 2M19 12h3"/></symbol>
<symbol id="rotv" viewBox="0 0 24 24"><path d="M3 12l7-8 5 7-7 8zM15 8c4 0 5 6 1 9M19 9l-3-2M16 17l2-3"/></symbol>
<symbol id="scale" viewBox="0 0 24 24"><path stroke-width="1.600" d="M3 7h18v10H3zM7 17v-4M11 17v-5M15 17v-4"/></symbol>
<symbol id="layq" viewBox="0 0 24 24"><path stroke-width="1.700" d="M8 4h14l-6 5H3zM3 13l2-1h11l5-4M3 18l2-1h11l5-4M3 9v9"/></symbol>
<symbol id="modq" viewBox="0 0 24 24"><path stroke-width="1.700" d="M3 4h18v16H3zM3 9l4-4 4 4 4-4 4 4M3 14l4-4M9 14l5-5M15 14l5-5M3 17h18"/></symbol>
<symbol id="ovr" viewBox="0 0 24 24"><path stroke-width="1.500" d="M10 6H3v12h7M12 5c4-3 6-1 7 2M20 3v4h-4"/><path fill="#888" d="M13 10h8v9h-8z"/></symbol>
<symbol id="ren" viewBox="0 0 24 24"><path stroke-width="1.400" d="M2 19L11 4v15zM9 13l6-6 6 6v7h-9M15 20v-5h3v5"/></symbol>
<symbol id="std" viewBox="0 0 24 24"><path stroke-width="1.500" d="M4 11h17v10H4zM3 6h19M4 3v6M21 3v6"/></symbol>
<symbol id="zprev" viewBox="0 0 24 24"><path stroke-width="1.500" d="M2 10v8h8M3 17l5-5M6 8c2-6 15-6 15 4 0 6-6 9-12 7"/></symbol>
<symbol id="znext" viewBox="0 0 24 24"><path stroke-width="1.500" d="M22 10v8h-8M21 17l-5-5M18 8c-2-6-15-6-15 4 0 6 6 9 12 7"/></symbol>
<symbol id="zin" viewBox="0 0 24 24"><circle cx="11" cy="11" r="8" stroke-width="1.500"/><path stroke-width="1.700" d="M17 17l5 5M7 11h8M11 7v8"/></symbol>
<symbol id="zfit" viewBox="0 0 24 24"><circle cx="11" cy="11" r="9" stroke-width="1.500"/><path stroke-width="1.700" d="M17 18l5 4M11 5v4M11 13v4M5 11h4M13 11h4M7 7l2 2M15 7l-2 2M7 15l2-2M15 15l-2-2"/></symbol>
<symbol id="wins" viewBox="0 0 24 24"><path stroke-width="1.700" d="M8 9h14v12H8zM5 16H3V4h15v3"/><path class="f" d="M3 3h15v3H3zM8 9h14v3H8z"/></symbol>

<symbol id="m1" viewBox="0 0 24 24"><path class="b" stroke-width="1.400" d="M3 15v7h19V7h-4"/><path stroke-width="1.500" d="M3 17L12 7M5 19L14 9M6 5c5-4 9-2 12 2l-2 3-4-4z"/></symbol>
<symbol id="m4" viewBox="0 0 24 24"><path stroke-width="1.500" d="M2 9l7-6 7 6M3 9v12h12V9M6 9h6v4H6zM8 21v-5h4v5M20 4v17M17 12h6M18 15h5"/></symbol>
<symbol id="cut" viewBox="0 0 24 24"><circle cx="6" cy="19" r="3"/><circle cx="18" cy="19" r="3"/><path d="M4 3l12 14M20 3L8 17"/></symbol>
<symbol id="copy" viewBox="0 0 24 24"><path class="g" d="M9 19H2V3h7l3 3M4 8h4M4 11h4M4 14h4"/><path stroke-width="1.400" d="M11 8h7l4 4v10H11zM13 13h6M13 16h7M13 19h7"/></symbol>
<symbol id="paste" viewBox="0 0 24 24"><path stroke-width="1.400" d="M10 21H2V5h5M15 5h4v5M7 3h8v4H7z"/><path class="b wf" stroke-width="1.400" d="M12 12h11v9H12zM15 15h5M15 18h5"/></symbol>
<symbol id="morph" viewBox="0 0 24 24"><path d="M9 10c-8 5-8 10-3 12h5c1-3 5-4 6-7M6 22v-5c2-1 6-2 6-5"/><circle class="b wf" cx="16" cy="8" r="6"/><path class="b" d="M16 4.500v7M12.500 8h7"/></symbol>
<symbol id="conn" viewBox="0 0 24 24"><path class="b" d="M6 9v7M18 9v7"/><path d="M9 6h6M9 19h6"/><path d="M4 4h5v5H4zM15 16h5v5h-5z"/><path class="b" d="M15 4h5v5h-5zM4 16h5v5H4z"/></symbol>
<symbol id="issue" viewBox="0 0 24 24"><path d="M4 22V4h16l-4 4 3 3M4 12h6"/><circle class="b wf" cx="15" cy="16" r="6"/><path class="b" d="M15 12.500v7M11.500 16h7"/></symbol>
<symbol id="sfp" viewBox="0 0 24 24"><path stroke-width="1.500" d="M8 14H2V4h12v5M10 10h11v10H10z"/><path class="f" d="M8 8h4v4H8zM19 8h4v4h-4zM8 18h4v4H8zM19 18h4v4h-4z"/></symbol>
<symbol id="s3d" viewBox="0 0 24 24"><path stroke-width="1.400" d="M2 7l4-4 6 1v4M2 7v8l6 1M2 7l6 1v8M11 11l4-2 6 1v9l-4 2-6-1zM11 11l6 1v9M17 12l4-2"/><path class="f" d="M9 10h3v3H9zM19 8h3v3h-3zM9 18h3v3H9zM19 18h3v3h-3zM15 11h3v3h-3zM15 20h3v3h-3z"/></symbol>
<symbol id="ss3d" viewBox="0 0 24 24"><path class="g" d="M2 7l4-4 6 1v4M2 7v8l6 1M2 7l6 1v8"/><path stroke-width="1.400" d="M11 11l4-2 6 1v9l-4 2-6-1zM11 11l6 1v9M17 12l4-2"/><path class="f" d="M9 10h3v3H9zM19 8h3v3h-3zM9 18h3v3H9zM19 18h3v3h-3zM15 11h3v3h-3zM15 20h3v3h-3z"/></symbol>
<symbol id="a3d" viewBox="0 0 24 24"><path stroke-width="1.300" d="M2 7l4-4 7 1v4M2 7v8l6 1M2 7l6 1v4M10 12l5-4 7 1v8l-5 4-7-2zM10 12l7 1v8M17 13l5-4"/></symbol>
<symbol id="zsel" viewBox="0 0 24 24"><circle cx="11" cy="11" r="8.500" stroke-width="1.500"/><path stroke-width="1.700" d="M17 17l6 6M6 13l6-7 5 8z"/><path class="f" d="M4 11h4v4H4zM10 4h4v4h-4zM15 12h4v4h-4z"/></symbol>
<symbol id="merge" viewBox="0 0 24 24"><path stroke-width="1.400" d="M2 7l4-4h8v5M2 7v15h11v-5M2 7h9V4M18 18v6M15 21h6"/><path class="b" stroke-width="1.600" d="M6 13l5-4h12l-4 6H6z"/></symbol>
<symbol id="solid" viewBox="0 0 24 24"><path stroke-width="1.600" d="M2 7l4-4h8v5M2 7v15h11l3-3M2 7h9V4M6 13l5-4h12l-4 6H6zM2 16h12"/></symbol>
<symbol id="opn" viewBox="0 0 24 24"><path stroke-width="1.400" d="M8 8l-6 1v13l18-4v-6M2 18l7-1 8 2M9 14v3"/><circle class="b wf" cx="17" cy="8" r="6"/><path class="b" d="M17 4.500v7M13.500 8h7"/></symbol>
<symbol id="clr" viewBox="0 0 24 24"><path stroke="#ff4a2d" stroke-width="1.700" d="M3 3l6 6M9 3L3 9M15 15l6 6M21 15l-6 6"/><path stroke-width="1.500" d="M15 4h5v5h-5zM4 16h5v5H4z"/></symbol>

<pattern id="wallA" width="47" height="24" x="944" y="838" patternUnits="userSpaceOnUse"><path fill="none" stroke="#b0b0b0" d="M9 0L3 2 1 9l2 7 6 2 29-6 6 2 2 7-2 7M46-3l-2 7-6 2L9 0"/></pattern>
<pattern id="wallB" width="15" height="8" x="992" y="780" patternUnits="userSpaceOnUse"><path fill="none" stroke="#b4b4b4" d="M3 0Q0 2 2 4L13 7M3 8Q0 6 2 4L13 1M13 1q3 3 0 6"/></pattern>
<clipPath id="insL"><path d="M943 729L1568 368V450L998 778H943z"/></clipPath>
<clipPath id="insR"><path d="M1568 368L1973 602V684L1568 450z"/></clipPath>
<path id="loop" d="M994 778v-6l-35-40v-6l8-10 11-2 10 8 13 46 7 5"/>
<path id="vee" d="M-21 0H0L-10-18M0 0L11-18"/>
<path id="veer" d="M18 0H0L-7-16M0 0L4-8M51 53l-3 10"/>
<path id="slash" d="M-16-16L16 17"/>
</defs>
</svg>

<div class="window">
<header class="title"><svg class="logo" viewBox="0 0 18 18"><rect width="18" height="18" rx="3" fill="#2f66d8"/><path fill="#8fb8ff" d="M0 3a3 3 0 0 1 3-3h6v10L0 18z"/><path fill="none" stroke="#fff" stroke-width="1.600" d="M3 15C4 8 8 4 12 4c2 2 3 6 3 11"/></svg><h1>Istjern 92MH 22.01.2024 - Archicad 26</h1>
<div class="wbtns"><button aria-label="Minimize"><svg viewBox="0 0 12 12"><path d="M1 6h10"/></svg></button><button aria-label="Maximize"><svg viewBox="0 0 12 12"><path d="M1 1h9v10H1z"/></svg></button><button aria-label="Close"><svg viewBox="0 0 12 12"><path d="M1 1l10 10M11 1L1 11"/></svg></button></div></header>

<nav class="menubar"><a href="#f"><u>F</u>ile</a><a href="#e"><u>E</u>dit</a><a href="#v"><u>V</u>iew</a><a href="#d"><u>D</u>esign</a><a href="#c">Do<u>c</u>ument</a><a href="#o"><u>O</u>ptions</a><a href="#t"><u>T</u>eamwork</a><a href="#w"><u>W</u>indow</a><a href="#ep">EPTAR Solutions</a><a href="#j">Jotun</a><a href="#n">Norkart</a><a href="#h"><u>H</u>elp</a>
<div class="docbtns"><button aria-label="Minimize document"><svg viewBox="0 0 12 12"><path d="M2 6h8"/></svg></button><button aria-label="Restore document"><svg viewBox="0 0 12 12"><path d="M2 4h5v6H2zM4 4V2h5v6H7"/></svg></button><button aria-label="Close document"><svg viewBox="0 0 12 12"><path d="M2 2l8 8M10 2l-8 8"/></svg></button></div></nav>

<div class="toolbar top"><i class="grip"></i>
<button class="i"><svg><use href="#new"/></svg></button><button class="d"><svg><use href="#drop"/></svg></button><button class="i"><svg><use href="#save"/></svg></button><button class="i"><svg><use href="#print"/></svg></button><i class="sep"></i>
<button class="i off"><svg><use href="#link"/></svg></button><button class="d off"><svg><use href="#drop"/></svg></button><button class="i off"><svg><use href="#swap"/></svg></button><button class="d off"><svg><use href="#drop"/></svg></button><i class="sep"></i>
<button class="i"><svg><use href="#find"/></svg></button><i class="sep"></i>
<button class="i"><svg><use href="#lib"/></svg></button><button class="d"><svg><use href="#drop"/></svg></button><button class="i"><svg><use href="#lay"/></svg></button><button class="d"><svg><use href="#drop"/></svg></button><button class="i"><svg><use href="#map"/></svg></button><button class="i"><svg><use href="#ham"/></svg></button><i class="sep"></i>
<button class="i"><svg><use href="#undo"/></svg></button><button class="i off"><svg><use href="#redo"/></svg></button><i class="sep"></i>
<button class="i on2"><svg><use href="#tri"/></svg></button><button class="d on2"><svg><use href="#drop"/></svg></button><button class="i on"><svg><use href="#guide"/></svg></button><button class="i on2"><svg><use href="#snap"/></svg></button><button class="d on2"><svg><use href="#drop"/></svg></button><button class="i"><svg><use href="#par"/></svg></button><button class="d"><svg><use href="#drop"/></svg></button><i class="sep"></i>
<button class="i on2"><svg><use href="#xy"/></svg></button><button class="d on2"><svg><use href="#drop"/></svg></button><button class="i gap"><svg><use href="#grid"/></svg></button><button class="d"><svg><use href="#drop"/></svg></button><button class="i"><svg><use href="#ruler"/></svg></button><button class="i"><svg><use href="#dupe"/></svg></button><button class="d"><svg><use href="#drop"/></svg></button><button class="i off"><svg><use href="#stamp"/></svg></button><button class="d off"><svg><use href="#drop"/></svg></button><button class="i"><svg><use href="#meas"/></svg></button><button class="i"><svg><use href="#dimh"/></svg></button><button class="d"><svg><use href="#drop"/></svg></button><button class="i"><svg><use href="#xs"/></svg></button><button class="i on"><svg><use href="#sun"/></svg></button><button class="i on"><svg><use href="#tjoin"/></svg></button><button class="i"><svg><use href="#a1"/></svg></button><button class="i"><svg><use href="#relink"/></svg></button><i class="sep tight"></i>
<button class="i"><svg><use href="#corner"/></svg></button><button class="i"><svg><use href="#arc"/></svg></button><button class="i off"><svg><use href="#upl"/></svg></button><button class="i"><svg><use href="#wr"/></svg></button><button class="d"><svg><use href="#drop"/></svg></button><button class="i"><svg><use href="#boxa"/></svg></button><button class="d"><svg><use href="#drop"/></svg></button><i class="sep"></i>
<button class="i"><svg><use href="#grp"/></svg></button><button class="d"><svg><use href="#drop"/></svg></button><i class="sep"></i>
<button class="i"><svg><use href="#ibeam"/></svg></button><button class="d"><svg><use href="#drop"/></svg></button><button class="i"><svg><use href="#house"/></svg></button><button class="d"><svg><use href="#drop"/></svg></button><button class="i"><svg><use href="#flag"/></svg></button><button class="i"><svg><use href="#flagl"/></svg></button><button class="i"><svg><use href="#cloud"/></svg></button><button class="i"><svg><use href="#photo"/></svg></button><button class="d"><svg><use href="#drop"/></svg></button><i class="sep"></i>
<button class="i"><svg><use href="#pip"/></svg></button><button class="i"><svg><use href="#pip"/></svg></button><button class="i off"><svg><use href="#pipg"/></svg></button><button class="d off"><svg><use href="#drop"/></svg></button>
</div>

<div class="middle">
<aside class="side">
 <section class="fav">
  <i class="hgrip"></i>
  <div class="searchrow"><input type="text" placeholder="Search Favorites" aria-label="Search Favorites"><button class="box gearb"><svg class="s20"><use href="#gear"/></svg><svg class="s10"><use href="#play"/></svg></button></div>
  <ul class="tree favtree">
   <li class="l0 sel"><svg class="c"><use href="#chev"/></svg><svg><use href="#favfolder"/></svg>Favorites</li>
   <li class="l1"><svg><use href="#folder"/></svg>2D</li><li class="l1"><svg><use href="#folder"/></svg>Akser</li><li class="l1"><svg><use href="#folder"/></svg>Andre arealer</li>
  </ul>
  <table class="list"><thead><tr><th class="sort"><svg class="s10"><path class="f" d="M0 8h10L5 2z"/></svg></th><th>Name</th></tr></thead><tbody>
  <tr><td><svg><use href="#folder"/></svg></td><td>2D</td></tr><tr><td><svg><use href="#folder"/></svg></td><td>Akser</td></tr><tr><td><svg><use href="#folder"/></svg></td><td>Andre arealer</td></tr><tr><td><svg><use href="#folder"/></svg></td><td>Areal rom</td></tr><tr><td><svg><use href="#folder"/></svg></td><td>Belysning</td></tr><tr><td><svg><use href="#folder"/></svg></td><td>Brann og rømning</td></tr><tr><td><svg><use href="#folder"/></svg></td><td>Curtain wall</td></tr><tr><td><svg><use href="#folder"/></svg></td><td>Dekker</td></tr><tr><td><svg><use href="#folder"/></svg></td><td>Detaljer og utsnitt</td></tr></tbody></table>
  <i class="vs vs1"></i><i class="vs vs2"></i>
  <div class="actions"><button class="off"><svg><use href="#starp"/></svg></button><button><svg><use href="#foldp"/></svg></button><button><svg><use href="#ex"/></svg></button><span class="box apply"><button>Apply</button><button class="ad"><svg class="s10"><use href="#drop"/></svg></button></span></div>
 </section>
 <section class="navi">
  <i class="hgrip"></i>
  <div class="navrow"><button><svg><use href="#nav1"/></svg></button><i class="sep"></i><button class="on"><svg><use href="#nav2"/></svg></button><button><svg><use href="#nav3"/></svg></button><button><svg><use href="#nav4"/></svg></button><button class="box menub"><svg class="s20"><use href="#ham3"/></svg><svg class="s10"><use href="#play"/></svg></button></div>
  <div class="searchrow"><input type="text" placeholder="Search View Map" aria-label="Search View Map"></div>
  <ul class="tree">
   <li class="l4 sel bold"><svg><use href="#sect"/></svg>Snitt hems</li>
   <li class="l4"><svg><use href="#sect"/></svg>Snitt Stue</li>
   <li class="l2"><svg class="c"><use href="#chev"/></svg><svg><use href="#folder"/></svg>Fasader</li>
   <li class="l3"><svg class="c"><use href="#chevr"/></svg><svg><use href="#sectl"/></svg>Fasader 1:100</li>
   <li class="l2"><svg><use href="#folder"/></svg>3D Dokumentasjon</li>
   <li class="l2"><svg class="c"><use href="#chev"/></svg><svg><use href="#folder"/></svg>Detaljer</li>
   <li class="l3"><svg class="c"><use href="#chev"/></svg><svg><use href="#detl"/></svg>Detaljer</li>
   <li class="l4"><svg><use href="#det"/></svg>D-01</li>
   <li class="l4"><svg><use href="#det"/></svg>D-02</li>
   <li class="l2"><svg class="c"><use href="#chev"/></svg><svg><use href="#folder"/></svg>Index</li>
   <li class="l3"><svg><use href="#plan"/></svg>Kontrolliste Arbeidstegnir</li>
   <li class="l3"><svg><use href="#layout"/></svg>Tegningsliste Arbeidstegr</li>
   <li class="l3"><svg><use href="#layout"/></svg>Tegning- og distribusjons</li>
   <li class="l3"><svg><use href="#rev"/></svg>Revisjonsliste siste revisjo</li>
   <li class="l1"><svg class="c"><use href="#chev"/></svg><svg><use href="#folder"/></svg>Arbeidstegninger rørlegger</li>
   <li class="l2"><svg class="c"><use href="#chev"/></svg><svg><use href="#folder"/></svg>Planer</li>
   <li class="l3"><svg class="c"><use href="#chev"/></svg><svg><use href="#planl"/></svg>Planer 1:50</li>
   <li class="l4"><svg><use href="#plan"/></svg>Takplan</li>
   <li class="l4"><svg><use href="#plan"/></svg>Hems</li>
   <li class="l4"><svg><use href="#plan"/></svg>1. Etasje</li>
   <li class="l4"><svg><use href="#plan"/></svg>Grunmur</li>
   <li class="l2"><svg class="c"><use href="#chev"/></svg><svg><use href="#folder"/></svg>Snitt</li>
   <li class="l3"><svg class="c"><use href="#chev"/></svg><svg><use href="#sectl"/></svg>snitt 1:50</li>
   <li class="l4"><svg><use href="#sect"/></svg>S-08 Snitt trapp</li>
   <li class="l4"><svg><use href="#sect"/></svg>Snitt hems</li>
  </ul>
  <i class="vs vs3"></i>
  <i class="hs"></i>
  <div class="actions"><button><svg><use href="#homep"/></svg></button><button><svg><use href="#homel"/></svg></button><button><svg><use href="#foldp"/></svg></button><button><svg><use href="#listb"/></svg></button><button><svg><use href="#ex"/></svg></button></div>
  <button class="props"><svg class="s10"><use href="#play"/></svg>Properties</button>
 </section>
</aside>

<div class="work">
<div class="infobox">
 <section class="first"><h2>Main:</h2><p class="sub">All Selected: 2</p><div class="row low"><button class="box sm"><svg class="s20"><use href="#sel1"/></svg><svg class="s10"><use href="#play"/></svg></button><button class="box sm"><svg class="s20"><use href="#sel2"/></svg><svg class="s10"><use href="#play"/></svg></button><button class="box sm on"><svg class="s20"><use href="#mag"/></svg></button></div><button class="box big roofb"><svg class="s30"><use href="#roofi"/></svg><i class="sep"></i><svg class="s10"><use href="#drop"/></svg></button></section>
 <section><h2>Layer:</h2><div class="row"><button class="box big wide"><svg class="s20"><use href="#eye"/></svg><span>26-- Yttertak</span><svg class="s10"><use href="#play"/></svg></button></div></section>
 <section><h2>Geometry Method:</h2><div class="row sp"><button class="off m"><svg class="s24"><use href="#gm1"/></svg></button><button class="box big off m"><svg class="s24"><use href="#gm2"/></svg></button></div></section>
 <section><h2>ID and Properties:</h2><div class="row"><input type="text" value="Tak med takstoler" aria-label="ID"><button class="box big db"><svg class="s20"><use href="#doc"/></svg><svg class="s10"><use href="#play"/></svg></button></div></section>
 <section><h2>Construction Method:</h2><div class="row sp"><button class="m"><svg class="s24"><use href="#cm1"/></svg></button><button class="box big on m"><svg class="s24"><use href="#cm2"/></svg></button><button class="m"><svg class="s24"><use href="#cm3"/></svg></button></div></section>
 <section><h2>Structure:</h2><div class="row"><button class="box big db"><svg class="s24"><use href="#hatch"/></svg><svg class="s10"><use href="#play"/></svg></button><button class="box big wide cen"><svg class="s24"><use href="#comp"/></svg><span>Tak torv</span><svg class="s10"><use href="#play"/></svg></button></div></section>
 <section><h2>Floor Plan and Section:</h2><div class="row"><button class="box big wide"><svg class="s20"><use href="#fps"/></svg><span>Floor Plan and Section...</span><svg class="s10"><use href="#play"/></svg></button></div></section>
 <section><h2>Linked Stories:</h2><div class="story"><span>Home Story:</span><div><svg class="hsi"><use href="#hstory"/></svg><span>4. Takplan</span><button class="box tiny"><svg class="s10"><use href="#play"/></svg></button></div></div></section>
 <section><h2>Roof Pivot Height and Pitch:</h2><div class="pitch"><svg class="sl"><use href="#slope"/></svg><div><p><input class="short" type="text" value="30,000°" aria-label="Pitch">°</p><p><input type="text" value="-28" aria-label="Height"></p></div><div class="pb"><button class="box tiny"><svg class="s10"><use href="#play"/></svg></button><button class="box tiny"><svg class="s10"><use href="#play"/></svg></button></div></div></section>
 <section class="last"><h2>Thickness:</h2><div class="row"><button class="box big off db"><svg class="s24"><use href="#thick"/></svg><svg class="s10"><use href="#play"/></svg></button><span class="dim">487</span></div></section>
</div>
<div class="lower">
<nav class="toolbox"><i class="hgrip"></i>
<button class="on"><svg><use href="#arrow"/></svg></button><button><svg><use href="#marq"/></svg></button><h3>Design</h3>
<button><svg><use href="#t1"/></svg></button><button><svg><use href="#t2"/></svg></button><button><svg><use href="#t3"/></svg></button><button><svg><use href="#t4"/></svg></button><button><svg><use href="#t5"/></svg></button><button><svg><use href="#t6"/></svg></button><button><svg><use href="#t7"/></svg></button><button><svg class="wd"><use href="#t8"/></svg></button><button><svg class="wd"><use href="#t9"/></svg></button><button><svg><use href="#t10"/></svg></button><button><svg><use href="#t11"/></svg></button><button><svg class="wd"><use href="#t12"/></svg></button><button><svg><use href="#t13"/></svg></button><button><svg><use href="#t14"/></svg></button><button><svg class="wd"><use href="#t15"/></svg></button><button><svg><use href="#t16"/></svg></button><button><svg><use href="#t17"/></svg></button><button><svg><use href="#t18"/></svg></button><button><svg><use href="#t19"/></svg></button><button><svg><use href="#t20"/></svg></button><button><svg><use href="#t21"/></svg></button><button><svg><use href="#t22"/></svg></button>
<h3>Docume</h3><h3>More</h3></nav>
<div class="view">
<div class="tabs"><button class="ov"><svg class="s20"><use href="#four"/></svg></button><a class="tab" href="#hems"><svg><use href="#plan"/></svg>(!) Hems [3. Hems]</a><a class="tab active" href="#snitt"><svg><use href="#sect"/></svg>(!) Snitt hems [Snitt A]<button class="x" aria-label="Close tab"><svg class="s10" viewBox="0 0 10 10"><path stroke-width="2" d="M1 1l7 7M8 1L1 8"/></svg></button></a><a class="tab" href="#gen"><svg><use href="#d3"/></svg>(!) Generic Perspective (7) [3D / All]</a><button class="end"><svg class="s20"><use href="#h3"/></svg><svg class="s10"><use href="#drop"/></svg></button></div>
<div class="canvas">
<svg class="drawing" viewBox="276 172 1697 970" preserveAspectRatio="xMinYMin slice">
<path fill="#e4ffe4" d="M276 1039L1568 293L1973 527V684L1568 450L998 778H943V810L366 1143H276z"/>
<g class="ins"><g clip-path="url(#insL)"><use href="#loop" x="-35" y="20"/><use href="#loop"/><use href="#loop" x="35" y="-20"/><use href="#loop" x="70" y="-40"/><use href="#loop" x="105" y="-61"/><use href="#loop" x="140" y="-81"/><use href="#loop" x="175" y="-101"/><use href="#loop" x="210" y="-121"/><use href="#loop" x="245" y="-141"/><use href="#loop" x="280" y="-162"/><use href="#loop" x="315" y="-182"/><use href="#loop" x="350" y="-202"/><use href="#loop" x="385" y="-222"/><use href="#loop" x="420" y="-242"/><use href="#loop" x="455" y="-263"/><use href="#loop" x="490" y="-283"/><use href="#loop" x="525" y="-303"/><use href="#loop" x="560" y="-323"/><use href="#loop" x="595" y="-343"/></g>
<g clip-path="url(#insR)"><g transform="matrix(-1 0 0 1 3128 -4)"><use href="#loop" x="560" y="-323"/><use href="#loop" x="525" y="-303"/><use href="#loop" x="490" y="-283"/><use href="#loop" x="455" y="-263"/><use href="#loop" x="420" y="-242"/><use href="#loop" x="385" y="-222"/><use href="#loop" x="350" y="-202"/><use href="#loop" x="315" y="-182"/><use href="#loop" x="280" y="-162"/><use href="#loop" x="245" y="-141"/><use href="#loop" x="210" y="-121"/><use href="#loop" x="175" y="-101"/><use href="#loop" x="140" y="-81"/></g></g>
<use href="#vee" x="340" y="1036"/><use href="#vee" x="465" y="964"/><use href="#vee" x="590" y="892"/><use href="#vee" x="715" y="820"/><use href="#vee" x="840" y="748"/><use href="#vee" x="965" y="676"/><use href="#vee" x="1090" y="604"/><use href="#vee" x="1215" y="532"/><use href="#vee" x="1340" y="460"/><use href="#vee" x="1464" y="388"/>
<use href="#veer" x="1589" y="316"/><use href="#veer" x="1714" y="388"/><use href="#veer" x="1838" y="460"/><use href="#veer" x="1964" y="532"/></g>
<g class="blk"><path d="M382.500 1017V1142M358 1047.500H1973M633.500 1014v-10M633 1004.500h4M751 1004.500h4M755.500 1004v5M633.500 1042v10M755.500 1043v4"/><path d="M447.500 1105V1142M447 1140.500H976M976.500 1140v3"/></g>
<path class="thin" d="M382 1142L447 1105M366 1064L399 1031M990 1063L1023 1031M777 824L817 883"/>
<path class="ins" d="M394 1142l4-10 5 10M404 1142l15-22 1 22M424 1142l-5-20M428 1142l15-22-4-10M444 1118v15"/>
<path stroke="#bbb" stroke-width="2" stroke-dasharray="1 7" d="M452 1142H976"/>
<path fill="url(#wallA)" d="M944 779H991V1142H944z"/><path fill="url(#wallB)" d="M992 790h15V1142h-15z"/>
<g class="blk"><path d="M943.500 821V1142M991.500 778V1142M1006.500 778V1142M1010.500 778V1142M943 778.500H1012"/></g>
<path class="ins" d="M994 780L1568 451M1568 451L1973 685"/>
<g class="thin"><path d="M994 788L1568 457L1973 691M994 792L1568 460M994 795L1568 464L1973 698"/><path stroke="#777" stroke-dasharray="2 1" d="M1000 798L1568 467L1973 701M994 802L1568 470L1973 704"/></g>
<path stroke="#b5a5b5" stroke-width="5" stroke-dasharray="1 12" d="M1568 453L1973 687"/>
<path class="dg" d="M994 793L1568 461L1973 695M943 821L991 794M943 778.500H998"/>
<path stroke="#1b6b1b" stroke-dasharray="2 1" d="M998 778L1568 450L1973 684"/>
<g class="grn"><path d="M276 1039L1568 293L1973 527M276 1087L1568 341L1973 575M276 1095L1568 349L1973 583M276 1113L943 728M366 1143L943 810M1567.500 293V450"/><path stroke-width="2.600" d="M943 728.500L1568 367.500L1973 601.500M943 728V821"/></g>
<g class="blk"><path d="M1595.500 342V386M1563 366.500H1626M1595.500 465V1142M1565 574.500H1628M1590 513.500H1601M1565 1119.500H1628M1590 907.500H1601"/><path d="M1814.500 342V509M1814.500 591V1142M1782 366.500H1845M1808 845.500h12"/><path d="M1467 524.500H1668M1447 535.500H1689M1409 542.500H1692M1417.500 537V700M1457.500 542V1142M1678.500 542V1142M1678 574.500h4M1678 1119.500h4M1441 1119.500h2"/><path stroke-width="2" d="M1447 541H1691"/><path d="M1425.500 600V574.500H1442M1697 574.500H1713.500V599M1697 1119.500H1713.500V1094"/><path stroke-dasharray="33 15" d="M1713.500 614V1090"/>
<path d="M1552.500 509v4h4M1551.500 790v-5h4M1591 785.500h4M1551.500 903v4h4M1776.500 748v-5h4M1810 743.500h4M1776.500 840v5h4M1505.500 1106v-4h4M1548 1102.500h4v4M1114.500 367v10M1109 372.500h11M1237 373.500h4v4M1114.500 443v4h4M1237 447.500h4v-4"/></g>
<g class="thin"><use href="#slash" x="1595" y="366"/><use href="#slash" x="1595" y="574"/><use href="#slash" x="1814" y="366"/><use href="#slash" x="1595" y="1119"/><path d="M1414 538l16 16M1580 1130l12 12"/></g>
<path stroke="#0000ff" stroke-width="3" d="M382 1133.500H1973M992 793.500H1973"/>
<g class="dimtext"><text x="641" y="1041">1 948</text><text class="big" x="1114" y="432">30 g</text><text transform="translate(1589 901) rotate(-90)">1 700</text><text class="mid" transform="translate(1810 842) rotate(-90)">2 667</text><text transform="translate(1588 508) rotate(-90)">64</text><text text-anchor="end" transform="translate(1544 1108) rotate(-90)">36</text></g>
<g class="node"><circle cx="1568" cy="293" r="3.500"/><circle cx="1568" cy="368" r="3.500"/><circle cx="1568" cy="449" r="3.500"/><ellipse cx="1568" cy="454" rx="6" ry="3"/><circle cx="1568" cy="460" r="3.500"/><circle cx="1735" cy="390" r="3.500"/><circle cx="1735" cy="546" r="3.500"/><circle cx="943" cy="729" r="3.500"/><circle cx="943" cy="821" r="3.500"/><circle cx="991" cy="794" r="3.500"/><circle cx="382" cy="1133" r="3.500"/></g>
<g class="tag"><rect x="1108" y="173" width="32" height="16" rx="2"/><rect x="277" y="641" width="16" height="32" rx="2"/><rect x="1957" y="641" width="16" height="32" rx="2"/><rect x="1108" y="1126" width="32" height="16" rx="2"/></g>
<path stroke="#f5a05a" stroke-dasharray="5 2" d="M1111 181.500h27M285.500 644v26M1963.500 644v26M1111 1133.500h27"/>
</svg>
</div>
<div class="quick"><div class="zooms"><button><svg class="s18"><use href="#zprev"/></svg></button><button class="off"><svg class="s18"><use href="#znext"/></svg></button><button><svg class="s18"><use href="#zin"/></svg></button></div>
<button class="q"><svg class="s18"><use href="#zfit"/></svg><span>373%</span><svg class="s10"><use href="#play"/></svg></button><button class="q off"><svg class="s18"><use href="#rotv"/></svg><span>N/A</span><svg class="s10"><use href="#play"/></svg></button><button class="q"><svg class="s18"><use href="#scale"/></svg><span>1:50</span><svg class="s10"><use href="#play"/></svg></button><button class="q"><svg class="s18"><use href="#layq"/></svg><span>Custom</span><svg class="s10"><use href="#play"/></svg></button><button class="q"><svg class="s18"><use href="#modq"/></svg><span>Entire Model</span><svg class="s10"><use href="#play"/></svg></button><button class="q"><svg class="s18"><use href="#pen"/></svg><span></span></button><button class="q"><svg class="s18"></svg><span>03 Arbeidstegning</span><svg class="s10"><use href="#play"/></svg></button><button class="q"><svg class="s18"><use href="#ovr"/></svg><span>03 Arbeidstegning</span><svg class="s10"><use href="#play"/></svg></button><button class="q"><svg class="s18"><use href="#ren"/></svg><span>01 Nybygg</span><svg class="s10"><use href="#play"/></svg></button><button class="q"><svg class="s18"><use href="#std"/></svg><span>Standard</span><svg class="s10"><use href="#play"/></svg></button></div>
</div></div></div></div>

<div class="toolbar bottom"><div class="layers"><i class="grip"></i><svg class="s24"><use href="#cyc"/></svg><svg class="s24"><use href="#lock2"/></svg><i class="sep"></i><div class="lg l3w"><b>Selection's Layer:</b><p><svg class="s18"><use href="#eyex"/></svg><svg class="s14"><use href="#lock"/></svg><svg class="s14"><use href="#ulock"/></svg></p></div><i class="sep"></i><div class="lg l2w"><b>Others' Layer:</b><p><svg class="s18"><use href="#eyex"/></svg><svg class="s14"><use href="#lock"/></svg></p></div><i class="sep"></i><div class="ur"><svg class="s14"><use href="#redo"/></svg><svg class="s14"><use href="#undo"/></svg></div></div><i class="grip"></i>
<button class="i"><svg><use href="#info"/></svg></button><button class="d"><svg><use href="#drop"/></svg></button><i class="sep"></i>
<button class="i"><svg><use href="#b1"/></svg></button><button class="i"><svg><use href="#b2"/></svg></button><button class="i"><svg><use href="#b3"/></svg></button><button class="i"><svg><use href="#b4"/></svg></button><i class="sep"></i>
<button class="i"><svg><use href="#b5"/></svg></button><button class="i"><svg><use href="#b6"/></svg></button><button class="i"><svg><use href="#b7"/></svg></button><button class="i"><svg><use href="#b8"/></svg></button><i class="sep"></i>
<button class="i"><svg><use href="#b9"/></svg></button><button class="i"><svg><use href="#b10"/></svg></button><button class="i"><svg><use href="#b11"/></svg></button><button class="i gap"><svg><use href="#b12"/></svg></button><button class="d"><svg><use href="#drop"/></svg></button><i class="sep"></i>
<button class="i"><svg><use href="#b13"/></svg></button><button class="i"><svg><use href="#b14"/></svg></button><i class="sep"></i>
<button class="i gap"><svg><use href="#b15"/></svg></button><button class="d"><svg><use href="#drop"/></svg></button><i class="sep"></i>
<button class="i off"><svg><use href="#b16"/></svg></button><button class="i off"><svg><use href="#b17"/></svg></button><i class="sep"></i>
<button class="i off"><svg><use href="#b18"/></svg></button><button class="i off"><svg><use href="#b19"/></svg></button><button class="i off"><svg><use href="#b20"/></svg></button><button class="i off"><svg><use href="#b21"/></svg></button><i class="sep"></i>
<button class="i"><svg><use href="#b22"/></svg></button><button class="d"><svg><use href="#drop"/></svg></button><i class="sep"></i>
<button class="i off"><svg><use href="#ha"/></svg></button><button class="i"><svg><use href="#ha"/></svg></button><button class="i"><svg><use href="#ha"/></svg></button><button class="i"><svg><use href="#ha"/></svg></button><button class="i"><svg><use href="#ha"/></svg></button><button class="i"><svg><use href="#hb"/></svg></button><button class="i"><svg><use href="#pend"/></svg></button><button class="i"><svg><use href="#hl"/></svg></button><button class="i"><svg><use href="#ha"/></svg></button><i class="sep"></i>
<button class="i gap off"><svg><use href="#c1"/></svg></button><button class="d off"><svg><use href="#drop"/></svg></button><button class="i off gap"><svg><use href="#c2"/></svg></button><button class="d off"><svg><use href="#drop"/></svg></button><button class="i"><svg><use href="#c3"/></svg></button><button class="i"><svg><use href="#c4"/></svg></button><button class="i"><svg><use href="#c5"/></svg></button><button class="i off"><svg><use href="#c6"/></svg></button><i class="sep"></i>
<button class="i gap"><svg><use href="#wand"/></svg></button><button class="d"><svg><use href="#drop"/></svg></button>
</div>
<footer class="status"><span class="msg">Merge the selected elements to Roof/Shell/Morph.</span><svg class="s20"><use href="#wins"/></svg><span class="gid">GRAPHISOFT <small>ID</small></span><svg class="corner" viewBox="0 0 16 16"><path stroke="#999" stroke-width="2" stroke-dasharray="2 2" d="M4 14h12M8 10h8M12 6h4"/></svg></footer>

<div class="menu main">
<button><svg><use href="#m1"/></svg>Roof Selection Settings<kbd>Ctrl+T</kbd></button>
<button><span><u>S</u>elect &amp; Activate Tool</span></button>
<button><svg><use href="#relink"/></svg>Relink Home Story...</button><hr>
<button><svg><use href="#m4"/></svg>Edit Story Levels</button><hr>
<button><span><u>V</u>iews from this Section</span><svg class="s10"><use href="#play"/></svg></button><hr>
<button><svg><use href="#cut"/></svg><span><u>C</u>ut</span><kbd>Ctrl+X</kbd></button>
<button><svg><use href="#copy"/></svg>Copy<kbd>Ctrl+C</kbd></button>
<button><svg><use href="#paste"/></svg>Paste<kbd>Ctrl+V</kbd></button>
<button><svg><use href="#del"/></svg>Delete<kbd>Delete</kbd></button><hr>
<button><span>Move</span><svg class="s10"><use href="#play"/></svg></button><hr>
<button><span>Display Order</span><svg class="s10"><use href="#play"/></svg></button><hr>
<button><span><u>L</u>ayers</span><svg class="s10"><use href="#play"/></svg></button><hr>
<button><svg><use href="#morph"/></svg>Convert Selection to Morph(s)</button><hr>
<button class="hl"><svg><use href="#conn"/></svg>Connect<svg class="s10"><use href="#play"/></svg></button><hr>
<button><svg><use href="#issue"/></svg>Add to New Issue...</button><hr>
<button><svg><use href="#sfp"/></svg>Select on Floor Plan<kbd>Shift+F2</kbd></button>
<button><svg><use href="#s3d"/></svg>Select in 3D<kbd>Shift+F5</kbd></button>
<button><svg><use href="#ss3d"/></svg>Show Selection in 3D<kbd>Ctrl+F2</kbd></button>
<button><svg><use href="#a3d"/></svg>Show All in 3D<kbd>Ctrl+F5</kbd></button><hr>
<button><svg><use href="#zsel"/></svg><span><u>Z</u>oom to Selection</span><kbd>Ctrl+Shift+'</kbd></button><hr>
<button><span><u>D</u>eselect All</span></button>
</div>
<div class="menu subm">
<button><svg><use href="#house"/></svg>Trim Elements to Roof/Shell</button>
<button class="hl"><svg><use href="#merge"/></svg>Merge Elements</button><hr>
<button><svg><use href="#solid"/></svg><span>Solid Elemen<u>t</u> Operations...</span></button>
<button><svg><use href="#opn"/></svg>Create Openings From Selection...</button><hr>
<button><svg><use href="#clr"/></svg>Clear All Connections</button>
</div>
</div>
</body>
</html>
```
FILE: styles.css
```css
:root { --ink: #263238; --bg: #f0f0f0; --line: #d9d9d9; --sep: #8f8f8f; --on: #cce8ff; --blue: #2a7ff5; }
* { box-sizing: border-box; }
html, body { height: 100%; }
body { margin: 0; padding: 4px 4px 4px 3px; background: #bfbfbf; font: 11px/14px "Open Sans", "Noto Sans", sans-serif; color: #000; }
button, input, kbd { font: inherit; color: inherit; }
button { border: 0; background: none; padding: 0; margin: 0; display: flex; align-items: center; justify-content: center; }
h1, h2, h3, p, ul { margin: 0; padding: 0; font-weight: normal; font-size: inherit; list-style: none; }
a { color: inherit; text-decoration: none; }
svg { fill: none; stroke: var(--ink); stroke-width: 1.3; color: var(--ink); flex: none; }
.sprite { position: absolute; width: 0; height: 0; }
.f { fill: var(--ink); stroke: none; }
.b { stroke: var(--blue); }
.bf { fill: #e2f1ff; }
.bp { fill: var(--blue); stroke: none; }
.pf { fill: #ececec; }
.wf { fill: #fff; }
.w { stroke: #fff; }
.g { stroke: #9a9a9a; }
.o { stroke: #ee7d1b; stroke-width: 2; }
.off { opacity: .4; }
.s10 { width: 10px; height: 10px; }
.s14 { width: 14px; height: 14px; }
.s18 { width: 18px; height: 18px; }
.s20 { width: 20px; height: 20px; }
.s24 { width: 24px; height: 24px; }
.s30 { width: 28px; height: 24px; }

.window { position: relative; height: 100%; display: flex; flex-direction: column; background: var(--bg); border: 1px solid #50535a; border-width: 1px 0 0 1px; border-radius: 0 6px 6px 6px; }
.title { height: 29px; flex: none; display: flex; align-items: center; background: linear-gradient(90deg, #ecf1fa, #eef3fb 60%, #f2f3f7); padding: 0 0 2px 8px; border-radius: 0 6px 0 0; }
.title h1 { font-size: 11px; }
.logo { width: 15px; height: 15px; margin-right: 6px; stroke: none; }
.wbtns, .docbtns { margin-left: auto; display: flex; }
.wbtns button { width: 46px; }
.wbtns svg { width: 12px; height: 12px; stroke: #000; }
.menubar { height: 18px; flex: none; display: flex; align-items: center; background: #fff; }
.menubar a { padding: 0 8px 0 7px; }
.docbtns { padding-right: 3px; }
.docbtns button { width: 14px; }
.docbtns svg { width: 12px; height: 12px; stroke-width: 1.6; }

.toolbar { height: 37px; flex: none; display: flex; align-items: center; border-bottom: 1px solid var(--line); padding-left: 4px; overflow: hidden; }
.toolbar.top { padding-top: 2px; }
.toolbar .grip { width: 1px; height: 14px; background: #888; margin-right: 5px; }
.i { width: 26px; height: 30px; flex: none; }
.d { width: 18px; height: 30px; flex: none; }
.i svg { width: 22px; height: 22px; }
.d svg { width: 10px; height: 10px; }
.sep { width: 1px; height: 28px; background: var(--sep); flex: none; margin: 0 6px 0 2px; }
.tight { margin: 0 3px 0 2px; }
.gap { margin-left: 4px; }
.on, .on2 { background: var(--on); box-shadow: inset 0 0 0 1px #99d1ff; border-radius: 2px; }
.on2 { background: #bcdcf4; }
.bottom { height: 37px; }
.bottom .i { width: 25px; }
.bottom .sep { margin: 0 5px 0 2px; }
.layers { display: flex; align-items: center; width: 470px; }
.layers .grip { margin-right: 8px; }
.layers > .s24 { margin-right: 4px; }
.lg b { font-weight: normal; display: block; white-space: nowrap; }
.lg p { display: flex; gap: 15px; align-items: center; padding-left: 6px; }
.l3w { width: 87px; }
.l2w { width: 87px; }
.bottom .layers .sep { margin: 0 3px; }
.ur { display: flex; flex-direction: column; padding-left: 8px; gap: 2px; }
.status { height: 23px; flex: none; display: flex; align-items: center; padding-left: 3px; }
.msg { margin-right: auto; }
.gid { border: 1px solid var(--line); border-width: 0 1px; width: 131px; text-align: center; font: 600 13px/22px Lato, sans-serif; color: var(--ink); margin-left: 2px; }
.gid small { font-size: 13px; font-weight: 300; }
.corner { width: 16px; height: 16px; margin: 0 2px 0 6px; }

.middle { flex: 1; min-height: 0; display: flex; border-bottom: 1px solid var(--line); }
.side { width: 224px; flex: none; display: flex; flex-direction: column; border-right: 1px solid var(--line); }
.side section { position: relative; display: flex; flex-direction: column; }
.fav { height: 379px; border-bottom: 1px solid var(--line); flex: none; }
.navi { flex: 1; min-height: 0; }
.hgrip { height: 1px; width: 71px; background: #888; align-self: center; margin: 4px 0; flex: none; }
.fav .hgrip { margin-bottom: 5px; }
.searchrow { display: flex; gap: 5px; padding: 0 3px; height: 23px; flex: none; }
input { border: 0; border-bottom: 1px solid #888; background: #fff; padding: 0 4px; height: 22px; min-width: 0; flex: 1; border-radius: 1px; }
input::placeholder { color: #555; }
.box { background: #fdfdfd; border: 1px solid #d0d0d0; border-radius: 3px; }
.box.on { background: var(--on); border-color: #99d1ff; box-shadow: none; }
.gearb { width: 28px; height: 21px; }
.gearb .s20 { width: 16px; height: 16px; }
.tree { background: #fff; width: 207px; overflow: hidden; flex: none; }
.favtree { height: 87px; margin-top: 1px; }
.tree li { height: 22px; display: flex; align-items: center; white-space: nowrap; padding-left: 21px; }
.tree svg { width: 18px; height: 18px; margin-right: 4px; }
.tree .c { width: 20px; height: 20px; margin: 0 0 0 -20px; }
.tree .l1 { padding-left: 31px; }
.tree .l2 { padding-left: 41px; }
.tree .l3 { padding-left: 51px; }
.tree .l4 { padding-left: 61px; }
.tree .sel { background: #d9d9d9; }
.bold { font-weight: bold; }
.list { width: 207px; background: #fff; border-collapse: collapse; margin-top: 14px; }
.list th { height: 19px; text-align: left; font-weight: normal; padding: 0 3px; }
.list .sort { width: 24px; border-right: 1px solid var(--line); text-align: right; }
.sort .f { fill: #999; }
.list td { height: 21px; padding: 0 3px 2px; border-bottom: 1px solid #ececec; }
.list td svg { width: 18px; height: 18px; display: block; }
.vs { position: absolute; width: 2px; background: #888; left: 214px; }
.vs1 { top: 51px; height: 17px; }
.vs2 { top: 171px; height: 20px; }
.vs3 { top: 181px; height: 82px; }
.actions { display: flex; align-items: center; height: 32px; padding-left: 2px; }
.actions button { width: 30px; flex: none; }
.actions svg { width: 20px; height: 20px; }
.actions .apply { margin: 0 4px 0 auto; display: flex; height: 20px; color: #777; background: #f8f8f8; border-color: #e6e6e6; }
.actions .apply button { width: 70px; }
.actions .apply .ad { width: 10px; }
.actions .apply svg { width: 8px; height: 8px; opacity: .5; }
.navrow { display: flex; align-items: center; padding: 0 3px 0 3px; height: 30px; margin-bottom: 6px; }
.navrow button { width: 30px; height: 29px; }
.navrow svg { width: 20px; height: 20px; }
.navrow .sep { height: 18px; margin-left: 4px; }
.navrow .menub { width: 32px; height: 21px; margin-left: auto; }
.navrow .s10 { width: 10px; height: 10px; }
.navi .tree { margin-top: 1px; }
.hs { width: 92px; height: 2px; background: #888; margin: 8px 0 8px 17px; flex: none; }
.props { margin: 2px 2px 0; height: 22px; background: #d6d6d6; border-radius: 2px; justify-content: flex-start; gap: 9px; padding-left: 6px; width: 219px; }

.work { flex: 1; min-width: 0; display: flex; flex-direction: column; }
.infobox { height: 61px; flex: none; display: flex; border-bottom: 1px solid var(--line); overflow: hidden; }
.infobox section { width: 185px; flex: none; border-left: 1px solid var(--sep); padding: 0 4px; position: relative; }
.infobox .first { width: 189px; border: 0; padding-left: 9px; display: grid; grid-template-columns: 130px 1fr; align-content: start; }
.infobox .last { flex: 1; min-width: 0; overflow: hidden; }
.infobox h2 { font-size: 9px; line-height: 17px; white-space: nowrap; }
.sub { font-size: 9px; line-height: 17px; grid-column: 1; }
.first h2 { grid-column: 1 / 3; }
.row { display: flex; gap: 3px; align-items: center; height: 28px; margin-top: 7px; }
.low { margin: 0; height: 18px; grid-column: 1; }
.box.sm { width: 40px; height: 18px; gap: 1px; }
.box.sm svg.s20 { width: 20px; height: 16px; }
.box.big { height: 28px; }
.roofb { grid-column: 2; grid-row: 2 / 4; align-self: end; width: 48px; margin-left: -3px; }
.roofb .sep { margin: 0 1px; height: 22px; }
.wide { flex: 1; padding: 0 2px 0 4px; gap: 5px; }
.wide span { flex: 1; text-align: left; white-space: nowrap; }
.wide.cen span { text-align: center; }
.sp { gap: 0; margin-left: -1px; }
.m { width: 44px; }
.row input { height: 23px; }
.db { width: 38px; }
.db .s24 { width: 20px; }
.infobox section:nth-child(2) .row, .infobox section:nth-child(7) .row { padding-right: 2px; }
.story { display: flex; flex-direction: column; gap: 5px; padding-top: 4px; }
.story div { display: flex; align-items: center; gap: 10px; padding: 0 3px 0 8px; }
.hsi { width: 24px; height: 16px; }
.tiny { width: 13px; height: 13px; padding: 0; }
.story .tiny { margin-left: auto; }
.pitch { display: flex; gap: 10px; padding-top: 1px; }
.pitch .sl { width: 32px; height: 40px; }
.pitch > div { flex: 1; min-width: 0; }
.pitch p { display: flex; height: 21px; gap: 3px; }
.pitch input { height: 19px; }
.pitch .short { flex: none; width: 76px; }
.pitch .pb { flex: none; width: 14px; display: flex; flex-direction: column; gap: 8px; padding-top: 3px; margin-left: -4px; }
.dim { color: #888; border: 1px solid #e4e4e4; padding: 1px 2px; }

.lower { flex: 1; min-height: 0; display: flex; }
.toolbox { width: 48px; flex: none; border-right: 1px solid var(--line); display: flex; flex-direction: column; overflow: hidden; }
.toolbox .hgrip { width: 17px; margin-bottom: 3px; }
.toolbox button { height: 30px; width: 46px; flex: none; }
.toolbox .on { height: 28px; }
.toolbox svg { width: 22px; height: 22px; }
.toolbox .wd { width: 27px; }
.toolbox h3 { background: #d6d6d6; height: 20px; line-height: 19px; margin-top: 1px; padding-left: 2px; border-radius: 2px; flex: none; }
.toolbox button + h3 { margin: 5px 0 2px; }
.view { flex: 1; min-width: 0; display: flex; flex-direction: column; }
.tabs { height: 22px; flex: none; display: flex; background: #d9d9d9; }
.ov { width: 25px; border-right: 1px solid #bbb; }
.tab { width: 301px; display: flex; align-items: center; border-right: 1px solid #c4c4c4; padding-left: 4px; gap: 2px; }
.tab svg { width: 18px; height: 18px; }
.tab.active { background: #fff; border: 0; }
.tab .x { margin-left: auto; margin-right: 9px; }
.tab .x svg { width: 9px; height: 9px; stroke: #000; }
.end { margin-left: auto; width: 50px; background: #e8e8e8; gap: 6px; }
.canvas { flex: 1; min-height: 0; background: #fff; overflow: hidden; }
.drawing { width: 100%; height: 100%; display: block; stroke: none; }
.ins { stroke: #000; stroke-opacity: .27; fill: none; stroke-width: 1; }
.blk { stroke: #000; stroke-width: 1; }
.thin { stroke: #333; stroke-width: 1; }
.grn { stroke: #12ad12; stroke-width: 1.5; }
.dg { stroke: #158015; stroke-width: 1.2; }
.dimtext { fill: #000; font: 44px "Liberation Sans", Arial, sans-serif; }
.dimtext .big { font-size: 67px; }
.dimtext .mid { font-size: 38px; }
.node { fill: #000; }
.tag { fill: #000; fill-opacity: .05; }
.quick { height: 20px; flex: none; display: flex; background: var(--bg); }
.zooms { width: 71px; flex: none; display: flex; justify-content: space-around; }
.q { flex: 1 1 0; min-width: 0; border-left: 1px solid var(--sep); padding: 0 4px; }
.q span { flex: 1; text-align: center; white-space: nowrap; padding-left: 10px; }

.menu { position: absolute; background: var(--bg); border: 1px solid #a0a0a0; box-shadow: 3px 3px 2px rgba(0, 0, 0, .45); padding: 3px 2px 0; }
.main { left: 1202px; top: 593px; width: 235px; height: 579px; }
.subm { left: 1431px; top: 950px; width: 245px; height: 139px; }
.menu button { width: 100%; height: 25px; justify-content: flex-start; padding-left: 1px; border: 1px solid transparent; white-space: nowrap; }
.menu svg { width: 20px; height: 20px; margin-right: 7px; }
.menu button > span:first-child { margin-left: 27px; }
.menu .s10 { width: 10px; height: 10px; margin: 0 2px 0 auto; }
.menu kbd { margin: 0 16px 0 auto; }
.menu hr { margin: 1px 0 2px 27px; border: 0; height: 1px; background: #a0a0a0; }
.menu .hl { background: #91c1ee; border-color: #0a5aa0; }
```
